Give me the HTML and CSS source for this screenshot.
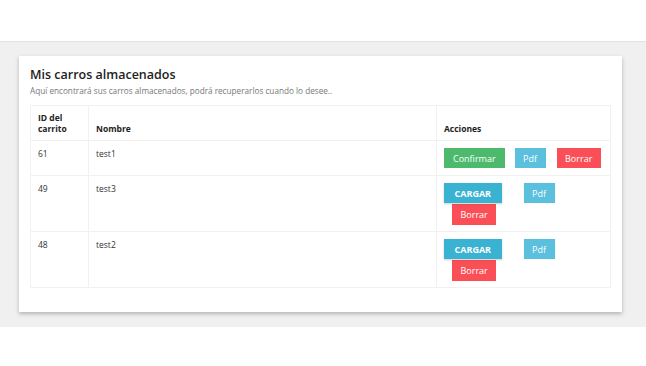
FILE: index.html
```html
<!DOCTYPE html>
<html lang="es">
<head>
    <meta charset="UTF-8">
    <meta name="viewport" content="width=device-width, initial-scale=1.0">
    <title>Mis carros almacenados</title>
    <link rel="stylesheet" href="styles.css">
</head>
<body>

    <!-- Cabecera -->
    <div class="topbar"></div>

    <!-- Contenido -->
    <div class="content">
        <div class="card">
            <h2 class="card-title">Mis carros almacenados</h2>
            <p class="card-sub">Aquí encontrará sus carros almacenados, podrá recuperarlos cuando lo desee..</p>

            <table class="carts">
                <thead>
                    <tr>
                        <th class="col-id">ID del<br>carrito</th>
                        <th class="col-name">Nombre</th>
                        <th class="col-actions">Acciones</th>
                    </tr>
                </thead>
                <tbody>
                    <tr class="row-single">
                        <td>61</td>
                        <td>test1</td>
                        <td>
                            <div class="actions">
                                <button class="btn btn-success">Confirmar</button>
                                <button class="btn btn-info">Pdf</button>
                                <button class="btn btn-danger btn-wide">Borrar</button>
                            </div>
                        </td>
                    </tr>
                    <tr>
                        <td>49</td>
                        <td>test3</td>
                        <td>
                            <div class="actions actions-load">
                                <button class="btn btn-load">CARGAR</button>
                                <button class="btn btn-info btn-raised">Pdf</button>
                            </div>
                            <button class="btn btn-danger btn-under">Borrar</button>
                        </td>
                    </tr>
                    <tr>
                        <td>48</td>
                        <td>test2</td>
                        <td>
                            <div class="actions actions-load">
                                <button class="btn btn-load">CARGAR</button>
                                <button class="btn btn-info btn-raised">Pdf</button>
                            </div>
                            <button class="btn btn-danger btn-under">Borrar</button>
                        </td>
                    </tr>
                </tbody>
            </table>
        </div>
    </div>

</body>
</html>
```

FILE: styles.css
```css
/* Reset */
* {
    margin: 0;
    padding: 0;
    box-sizing: border-box;
}

body {
    font-family: 'Open Sans', 'Liberation Sans', sans-serif;
    color: #333;
    background-color: #fff;
}

/* Cabecera */
.topbar {
    height: 42px;
    background-color: #fff;
    border-bottom: 1px solid #e4e4e4;
}

/* Contenido */
.content {
    background-color: #f0f0f0;
    padding: 14px 24px 15px 19px;
}

.card {
    background-color: #fff;
    padding: 10px 11px 24px 11px;
    box-shadow: 0 2px 4px rgba(0, 0, 0, 0.25);
}

.card-title {
    font-size: 12.5px;
    font-weight: 600;
    color: #222;
    line-height: 17px;
}

.card-sub {
    font-size: 8.2px;
    color: #777;
    margin-top: 2px;
    margin-bottom: 9px;
    line-height: 11px;
}

/* Tabla */
.carts {
    width: 100%;
    border-collapse: collapse;
    font-size: 8.5px;
    border: 1px solid #f1f1f1;
}

.carts th,
.carts td {
    border: 1px solid #f1f1f1;
    padding: 7px 7px;
    text-align: left;
    vertical-align: top;
    line-height: 11px;
}

.carts th {
    font-weight: 700;
    color: #222;
    vertical-align: bottom;
    padding-top: 6px;
    padding-bottom: 6px;
}

.carts td {
    padding-top: 7px;
    padding-bottom: 6px;
}

.carts .row-single td {
    padding-bottom: 7px;
}

.col-id {
    width: 58px;
}

.col-actions {
    width: 174px;
}

/* Botones */
.actions {
    display: flex;
    gap: 10px;
}

.actions-load {
    gap: 22px;
}

.btn {
    font-family: 'Open Sans', 'Liberation Sans', sans-serif;
    font-size: 9px;
    color: #fff;
    border: none;
    height: 20px;
    padding: 0 8.5px;
    cursor: pointer;
}

.btn-success {
    background-color: #4cb96d;
    padding: 0 9px;
}

.btn-info {
    background-color: #5bc0de;
}

.btn-danger {
    background-color: #fb4f57;
}

.btn-wide {
    margin-left: 1px;
}

.btn-load {
    background-color: #3ab2d1;
    font-weight: 700;
    padding: 0 10.5px;
    box-shadow: 0 1px 2px rgba(0, 0, 0, 0.2);
}

.btn-raised {
    box-shadow: 0 0 1px rgba(0, 0, 0, 0.15);
}

.btn-under {
    display: block;
    margin: 1px 0 0 8px;
    height: 21px;
}
```
